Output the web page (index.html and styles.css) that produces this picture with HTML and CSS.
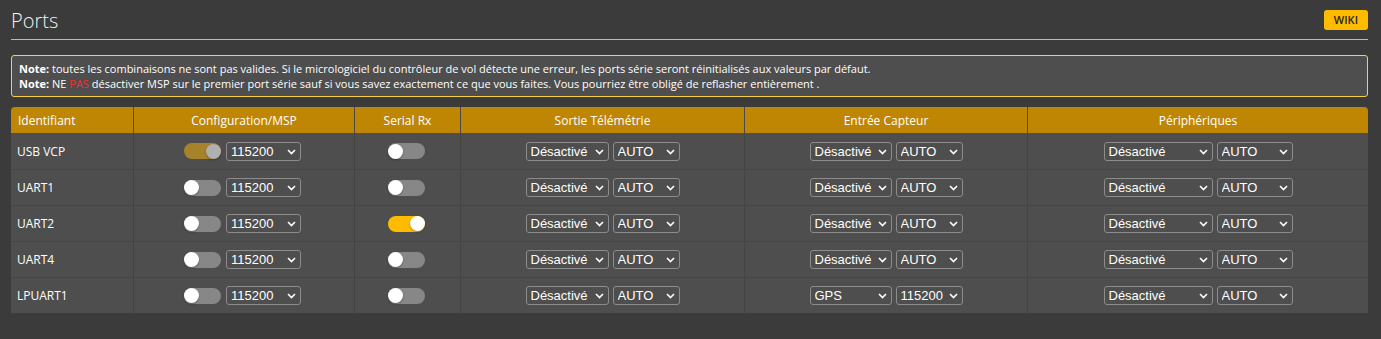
FILE: index.html
```html
<!DOCTYPE html>
<html lang="fr">
<head>
    <meta charset="UTF-8">
    <meta name="viewport" content="width=device-width, initial-scale=1.0">
    <title>Ports</title>
    <link rel="stylesheet" href="styles.css">
</head>
<body>
    <div class="tab-ports">
        <div class="tab-head">
            <h1>Ports</h1>
            <a href="#" class="btn-wiki">WIKI</a>
        </div>

        <div class="note">
            <p><strong>Note:</strong> toutes les combinaisons ne sont pas valides. Si le micrologiciel du contrôleur de vol détecte une erreur, les ports série seront réinitialisés aux valeurs par défaut.</p>
            <p><strong>Note:</strong> NE <span class="warn">PAS</span> désactiver MSP sur le premier port série sauf si vous savez exactement ce que vous faites. Vous pourriez être obligé de reflasher entièrement .</p>
        </div>

        <table class="ports">
            <colgroup>
                <col class="c-id">
                <col class="c-msp">
                <col class="c-rx">
                <col class="c-tel">
                <col class="c-sens">
                <col class="c-per">
            </colgroup>
            <thead>
                <tr>
                    <th class="left">Identifiant</th>
                    <th>Configuration/MSP</th>
                    <th>Serial Rx</th>
                    <th>Sortie Télémétrie</th>
                    <th>Entrée Capteur</th>
                    <th>Périphériques</th>
                </tr>
            </thead>
            <tbody>
                <tr>
                    <td class="left">USB VCP</td>
                    <td><div class="ctl gap5 sw"><span class="switch locked"><span class="knob"></span></span><span class="dd"><select class="w-msp"><option>9600</option><option>57600</option><option selected>115200</option><option>230400</option></select><svg class="chev" width="9" height="6" viewBox="0 0 9 6"><path d="M1 1l3.5 3.5L8 1" fill="none" stroke="#fff" stroke-width="1.6"/></svg></span></div></td>
                    <td><div class="ctl sw"><span class="switch"><span class="knob"></span></span></div></td>
                    <td><div class="ctl"><span class="dd"><select class="w-tel"><option>Désactivé</option><option>FrSky</option><option>SmartPort</option></select><svg class="chev" width="9" height="6" viewBox="0 0 9 6"><path d="M1 1l3.5 3.5L8 1" fill="none" stroke="#fff" stroke-width="1.6"/></svg></span><span class="dd"><select class="w-auto"><option>AUTO</option><option>57600</option><option>115200</option></select><svg class="chev" width="9" height="6" viewBox="0 0 9 6"><path d="M1 1l3.5 3.5L8 1" fill="none" stroke="#fff" stroke-width="1.6"/></svg></span></div></td>
                    <td><div class="ctl"><span class="dd"><select class="w-sens"><option>Désactivé</option><option>GPS</option></select><svg class="chev" width="9" height="6" viewBox="0 0 9 6"><path d="M1 1l3.5 3.5L8 1" fill="none" stroke="#fff" stroke-width="1.6"/></svg></span><span class="dd"><select class="w-auto"><option>AUTO</option><option>115200</option></select><svg class="chev" width="9" height="6" viewBox="0 0 9 6"><path d="M1 1l3.5 3.5L8 1" fill="none" stroke="#fff" stroke-width="1.6"/></svg></span></div></td>
                    <td><div class="ctl"><span class="dd"><select class="w-per"><option>Désactivé</option><option>Blackbox</option><option>VTX (TBS SmartAudio)</option></select><svg class="chev" width="9" height="6" viewBox="0 0 9 6"><path d="M1 1l3.5 3.5L8 1" fill="none" stroke="#fff" stroke-width="1.6"/></svg></span><span class="dd"><select class="w-perauto"><option>AUTO</option><option>115200</option></select><svg class="chev" width="9" height="6" viewBox="0 0 9 6"><path d="M1 1l3.5 3.5L8 1" fill="none" stroke="#fff" stroke-width="1.6"/></svg></span></div></td>
                </tr>
                <tr>
                    <td class="left">UART1</td>
                    <td><div class="ctl gap5 sw"><span class="switch"><span class="knob"></span></span><span class="dd"><select class="w-msp"><option>9600</option><option>57600</option><option selected>115200</option><option>230400</option></select><svg class="chev" width="9" height="6" viewBox="0 0 9 6"><path d="M1 1l3.5 3.5L8 1" fill="none" stroke="#fff" stroke-width="1.6"/></svg></span></div></td>
                    <td><div class="ctl sw"><span class="switch"><span class="knob"></span></span></div></td>
                    <td><div class="ctl"><span class="dd"><select class="w-tel"><option>Désactivé</option><option>FrSky</option><option>SmartPort</option></select><svg class="chev" width="9" height="6" viewBox="0 0 9 6"><path d="M1 1l3.5 3.5L8 1" fill="none" stroke="#fff" stroke-width="1.6"/></svg></span><span class="dd"><select class="w-auto"><option>AUTO</option><option>57600</option><option>115200</option></select><svg class="chev" width="9" height="6" viewBox="0 0 9 6"><path d="M1 1l3.5 3.5L8 1" fill="none" stroke="#fff" stroke-width="1.6"/></svg></span></div></td>
                    <td><div class="ctl"><span class="dd"><select class="w-sens"><option>Désactivé</option><option>GPS</option></select><svg class="chev" width="9" height="6" viewBox="0 0 9 6"><path d="M1 1l3.5 3.5L8 1" fill="none" stroke="#fff" stroke-width="1.6"/></svg></span><span class="dd"><select class="w-auto"><option>AUTO</option><option>115200</option></select><svg class="chev" width="9" height="6" viewBox="0 0 9 6"><path d="M1 1l3.5 3.5L8 1" fill="none" stroke="#fff" stroke-width="1.6"/></svg></span></div></td>
                    <td><div class="ctl"><span class="dd"><select class="w-per"><option>Désactivé</option><option>Blackbox</option><option>VTX (TBS SmartAudio)</option></select><svg class="chev" width="9" height="6" viewBox="0 0 9 6"><path d="M1 1l3.5 3.5L8 1" fill="none" stroke="#fff" stroke-width="1.6"/></svg></span><span class="dd"><select class="w-perauto"><option>AUTO</option><option>115200</option></select><svg class="chev" width="9" height="6" viewBox="0 0 9 6"><path d="M1 1l3.5 3.5L8 1" fill="none" stroke="#fff" stroke-width="1.6"/></svg></span></div></td>
                </tr>
                <tr>
                    <td class="left">UART2</td>
                    <td><div class="ctl gap5 sw"><span class="switch"><span class="knob"></span></span><span class="dd"><select class="w-msp"><option>9600</option><option>57600</option><option selected>115200</option><option>230400</option></select><svg class="chev" width="9" height="6" viewBox="0 0 9 6"><path d="M1 1l3.5 3.5L8 1" fill="none" stroke="#fff" stroke-width="1.6"/></svg></span></div></td>
                    <td><div class="ctl sw"><span class="switch on"><span class="knob"></span></span></div></td>
                    <td><div class="ctl"><span class="dd"><select class="w-tel"><option>Désactivé</option><option>FrSky</option><option>SmartPort</option></select><svg class="chev" width="9" height="6" viewBox="0 0 9 6"><path d="M1 1l3.5 3.5L8 1" fill="none" stroke="#fff" stroke-width="1.6"/></svg></span><span class="dd"><select class="w-auto"><option>AUTO</option><option>57600</option><option>115200</option></select><svg class="chev" width="9" height="6" viewBox="0 0 9 6"><path d="M1 1l3.5 3.5L8 1" fill="none" stroke="#fff" stroke-width="1.6"/></svg></span></div></td>
                    <td><div class="ctl"><span class="dd"><select class="w-sens"><option>Désactivé</option><option>GPS</option></select><svg class="chev" width="9" height="6" viewBox="0 0 9 6"><path d="M1 1l3.5 3.5L8 1" fill="none" stroke="#fff" stroke-width="1.6"/></svg></span><span class="dd"><select class="w-auto"><option>AUTO</option><option>115200</option></select><svg class="chev" width="9" height="6" viewBox="0 0 9 6"><path d="M1 1l3.5 3.5L8 1" fill="none" stroke="#fff" stroke-width="1.6"/></svg></span></div></td>
                    <td><div class="ctl"><span class="dd"><select class="w-per"><option>Désactivé</option><option>Blackbox</option><option>VTX (TBS SmartAudio)</option></select><svg class="chev" width="9" height="6" viewBox="0 0 9 6"><path d="M1 1l3.5 3.5L8 1" fill="none" stroke="#fff" stroke-width="1.6"/></svg></span><span class="dd"><select class="w-perauto"><option>AUTO</option><option>115200</option></select><svg class="chev" width="9" height="6" viewBox="0 0 9 6"><path d="M1 1l3.5 3.5L8 1" fill="none" stroke="#fff" stroke-width="1.6"/></svg></span></div></td>
                </tr>
                <tr>
                    <td class="left">UART4</td>
                    <td><div class="ctl gap5 sw"><span class="switch"><span class="knob"></span></span><span class="dd"><select class="w-msp"><option>9600</option><option>57600</option><option selected>115200</option><option>230400</option></select><svg class="chev" width="9" height="6" viewBox="0 0 9 6"><path d="M1 1l3.5 3.5L8 1" fill="none" stroke="#fff" stroke-width="1.6"/></svg></span></div></td>
                    <td><div class="ctl sw"><span class="switch"><span class="knob"></span></span></div></td>
                    <td><div class="ctl"><span class="dd"><select class="w-tel"><option>Désactivé</option><option>FrSky</option><option>SmartPort</option></select><svg class="chev" width="9" height="6" viewBox="0 0 9 6"><path d="M1 1l3.5 3.5L8 1" fill="none" stroke="#fff" stroke-width="1.6"/></svg></span><span class="dd"><select class="w-auto"><option>AUTO</option><option>57600</option><option>115200</option></select><svg class="chev" width="9" height="6" viewBox="0 0 9 6"><path d="M1 1l3.5 3.5L8 1" fill="none" stroke="#fff" stroke-width="1.6"/></svg></span></div></td>
                    <td><div class="ctl"><span class="dd"><select class="w-sens"><option>Désactivé</option><option>GPS</option></select><svg class="chev" width="9" height="6" viewBox="0 0 9 6"><path d="M1 1l3.5 3.5L8 1" fill="none" stroke="#fff" stroke-width="1.6"/></svg></span><span class="dd"><select class="w-auto"><option>AUTO</option><option>115200</option></select><svg class="chev" width="9" height="6" viewBox="0 0 9 6"><path d="M1 1l3.5 3.5L8 1" fill="none" stroke="#fff" stroke-width="1.6"/></svg></span></div></td>
                    <td><div class="ctl"><span class="dd"><select class="w-per"><option>Désactivé</option><option>Blackbox</option><option>VTX (TBS SmartAudio)</option></select><svg class="chev" width="9" height="6" viewBox="0 0 9 6"><path d="M1 1l3.5 3.5L8 1" fill="none" stroke="#fff" stroke-width="1.6"/></svg></span><span class="dd"><select class="w-perauto"><option>AUTO</option><option>115200</option></select><svg class="chev" width="9" height="6" viewBox="0 0 9 6"><path d="M1 1l3.5 3.5L8 1" fill="none" stroke="#fff" stroke-width="1.6"/></svg></span></div></td>
                </tr>
                <tr>
                    <td class="left">LPUART1</td>
                    <td><div class="ctl gap5 sw"><span class="switch"><span class="knob"></span></span><span class="dd"><select class="w-msp"><option>9600</option><option>57600</option><option selected>115200</option><option>230400</option></select><svg class="chev" width="9" height="6" viewBox="0 0 9 6"><path d="M1 1l3.5 3.5L8 1" fill="none" stroke="#fff" stroke-width="1.6"/></svg></span></div></td>
                    <td><div class="ctl sw"><span class="switch"><span class="knob"></span></span></div></td>
                    <td><div class="ctl"><span class="dd"><select class="w-tel"><option>Désactivé</option><option>FrSky</option><option>SmartPort</option></select><svg class="chev" width="9" height="6" viewBox="0 0 9 6"><path d="M1 1l3.5 3.5L8 1" fill="none" stroke="#fff" stroke-width="1.6"/></svg></span><span class="dd"><select class="w-auto"><option>AUTO</option><option>57600</option><option>115200</option></select><svg class="chev" width="9" height="6" viewBox="0 0 9 6"><path d="M1 1l3.5 3.5L8 1" fill="none" stroke="#fff" stroke-width="1.6"/></svg></span></div></td>
                    <td><div class="ctl"><span class="dd"><select class="w-sens"><option>Désactivé</option><option selected>GPS</option></select><svg class="chev" width="9" height="6" viewBox="0 0 9 6"><path d="M1 1l3.5 3.5L8 1" fill="none" stroke="#fff" stroke-width="1.6"/></svg></span><span class="dd"><select class="w-auto"><option>AUTO</option><option selected>115200</option></select><svg class="chev" width="9" height="6" viewBox="0 0 9 6"><path d="M1 1l3.5 3.5L8 1" fill="none" stroke="#fff" stroke-width="1.6"/></svg></span></div></td>
                    <td><div class="ctl"><span class="dd"><select class="w-per"><option>Désactivé</option><option>Blackbox</option><option>VTX (TBS SmartAudio)</option></select><svg class="chev" width="9" height="6" viewBox="0 0 9 6"><path d="M1 1l3.5 3.5L8 1" fill="none" stroke="#fff" stroke-width="1.6"/></svg></span><span class="dd"><select class="w-perauto"><option>AUTO</option><option>115200</option></select><svg class="chev" width="9" height="6" viewBox="0 0 9 6"><path d="M1 1l3.5 3.5L8 1" fill="none" stroke="#fff" stroke-width="1.6"/></svg></span></div></td>
                </tr>
            </tbody>
        </table>
    </div>
</body>
</html>
```

FILE: styles.css
```css
body {
    margin: 0;
    background-color: #3a3b3a;
    color: #fff;
    font-family: "Open Sans", "Noto Sans", sans-serif;
}
.tab-ports {
    padding: 0 13px 0 11px;
}
.tab-head {
    display: flex;
    justify-content: space-between;
    align-items: flex-start;
    padding-top: 7px;
    padding-bottom: 5px;
    border-bottom: 1px solid #ffbb00;
}
.tab-head h1 {
    margin: 0;
    font-size: 20px;
    font-weight: 300;
    line-height: 27px;
    color: #f2f2f2;
}
.btn-wiki {
    margin-top: 3px;
    height: 20px;
    line-height: 20px;
    padding: 0 10px;
    background-color: #ffbb00;
    border-radius: 3px;
    color: #1f1f1f;
    font-size: 11px;
    font-weight: 600;
    text-decoration: none;
}
.note {
    margin-top: 15px;
    padding: 5px 7px;
    background-color: #4e4e4e;
    border: 1px solid #f5d04e;
    border-radius: 3px;
    font-size: 11px;
    line-height: 15px;
}
.note p {
    margin: 0;
}
.warn {
    color: #ff2a2a;
}
.ports {
    margin-top: 10px;
    width: 100%;
    table-layout: fixed;
    border-collapse: separate;
    border-spacing: 0;
    font-size: 12px;
}
.c-id { width: 122px; }
.c-msp { width: 221px; }
.c-rx { width: 106px; }
.c-tel { width: 284px; }
.c-sens { width: 283px; }
.c-per { width: 341px; }
.ports th {
    height: 26px;
    padding: 0;
    background-color: #bf8604;
    font-weight: 400;
    text-align: center;
    border-left: 1px solid #4a4a4a;
}
.ports th:first-child {
    border-left: none;
    border-top-left-radius: 4px;
}
.ports th:last-child {
    border-top-right-radius: 4px;
}
.ports td {
    height: 35px;
    padding: 0;
    background-color: #4e4e4e;
    border-left: 1px solid #444;
    border-top: 1px solid #464646;
    text-align: center;
}
.ports tbody tr:first-child td {
    border-top: none;
    height: 36px;
}
.ports td:first-child {
    border-left: none;
}
.ports .left {
    text-align: left;
    padding-left: 6px;
}
.ports th.left {
    padding-left: 7px;
}
.ctl {
    display: flex;
    justify-content: center;
    align-items: center;
    gap: 4px;
}
.ctl.gap5 {
    gap: 5px;
}
.ctl.sw {
    padding-right: 3px;
}
.switch {
    display: flex;
    align-items: center;
    width: 37px;
    height: 16px;
    border-radius: 8px;
    background-color: #878787;
}
.switch .knob {
    width: 15px;
    height: 15px;
    border-radius: 50%;
    background-color: #fff;
    box-shadow: 0 1px 2px rgba(0,0,0,0.3);
}
.switch.on {
    justify-content: flex-end;
    background-color: #ffbb00;
}
.switch.locked {
    justify-content: flex-end;
    background-color: #a6832a;
}
.switch.locked .knob {
    background-color: #b0b0b0;
}
.dd {
    position: relative;
    display: inline-block;
}
.dd select {
    appearance: none;
    -webkit-appearance: none;
    display: block;
    height: 19px;
    margin: 0;
    padding: 0 0 0 4px;
    background-color: transparent;
    border: 1px solid #8c8c8c;
    border-radius: 3px;
    color: #fff;
    font-family: "Liberation Sans", Arial, sans-serif;
    font-size: 13px;
}
.dd .chev {
    position: absolute;
    right: 5px;
    top: 7px;
    pointer-events: none;
}
.w-msp { width: 75px; }
.w-tel { width: 83px; }
.w-sens { width: 82px; }
.w-auto { width: 67px; }
.w-per { width: 109px; }
.w-perauto { width: 76px; }
```
